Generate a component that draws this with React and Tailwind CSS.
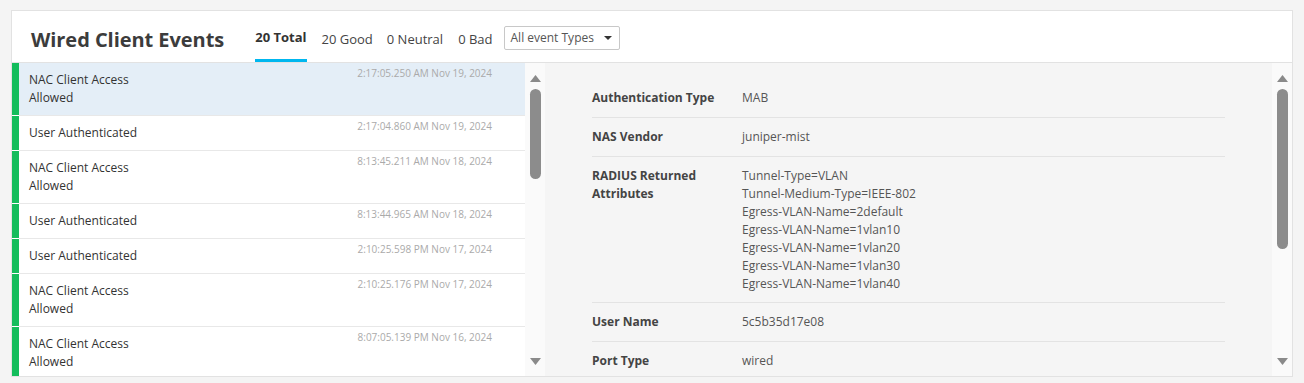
import React from 'react';

const events = [
  { title: 'NAC Client Access', sub: 'Allowed', time: '2:17:05.250 AM Nov 19, 2024', selected: true },
  { title: 'User Authenticated', time: '2:17:04.860 AM Nov 19, 2024' },
  { title: 'NAC Client Access', sub: 'Allowed', time: '8:13:45.211 AM Nov 18, 2024' },
  { title: 'User Authenticated', time: '8:13:44.965 AM Nov 18, 2024' },
  { title: 'User Authenticated', time: '2:10:25.598 PM Nov 17, 2024' },
  { title: 'NAC Client Access', sub: 'Allowed', time: '2:10:25.176 PM Nov 17, 2024' },
  { title: 'NAC Client Access', sub: 'Allowed', time: '8:07:05.139 PM Nov 16, 2024' },
];

const details = [
  { label: 'Authentication Type', value: ['MAB'] },
  { label: 'NAS Vendor', value: ['juniper-mist'] },
  {
    label: 'RADIUS Returned Attributes',
    value: [
      'Tunnel-Type=VLAN',
      'Tunnel-Medium-Type=IEEE-802',
      'Egress-VLAN-Name=2default',
      'Egress-VLAN-Name=1vlan10',
      'Egress-VLAN-Name=1vlan20',
      'Egress-VLAN-Name=1vlan30',
      'Egress-VLAN-Name=1vlan40',
    ],
  },
  { label: 'User Name', value: ['5c5b35d17e08'] },
  { label: 'Port Type', value: ['wired'] },
];

const Arrow = ({ down }) => (
  <svg width="11" height="7" viewBox="0 0 11 7" className="shrink-0">
    {down ? <path d="M0 0 L11 0 L5.5 7 Z" fill="#8a8a8a" /> : <path d="M0 7 L11 7 L5.5 0 Z" fill="#8a8a8a" />}
  </svg>
);

// fake scrollbar, the list and the detail pane both show one
const ScrollBar = ({ thumb }) => (
  <div className="w-[20px] shrink-0 bg-[#fafafa] flex flex-col items-center">
    <div className="mt-[12px]">
      <Arrow />
    </div>
    <div className={`mt-[7px] w-[11px] rounded-full bg-[#8c8c8c] ${thumb}`}></div>
    <div className="flex-1"></div>
    <div className="mb-[11px]">
      <Arrow down />
    </div>
  </div>
);

export default function App() {
  return (
    <div className="h-[383px] bg-[#f4f4f4] pt-[10px] pl-[11px] pr-[11px] font-['Open_Sans',sans-serif] text-[#333]">
      <div className="h-[367px] border border-[#e2e2e2] bg-white flex flex-col overflow-hidden">
        {/* header */}
        <div className="h-[52px] shrink-0 border-b border-[#e2e2e2] flex items-stretch pl-[19px]">
          <h1 className="self-center pt-[6px] text-[20px] font-bold text-[#3c3c3c] leading-none tracking-[-0.05px]">
            Wired Client Events
          </h1>
          <div className="ml-[31px] flex items-stretch text-[13px] text-[#444]">
            <div className="flex items-center border-b-[3px] border-[#00b7ef] pt-[6px] font-bold text-[#333]">20 Total</div>
            <div className="ml-[15px] flex items-center pt-[6px]">20 Good</div>
            <div className="ml-[14px] flex items-center pt-[6px]">0 Neutral</div>
            <div className="ml-[15px] flex items-center pt-[6px]">0 Bad</div>
            <div className="ml-[11px] self-center mt-[3px] h-[24px] w-[116px] border border-[#c8c8c8] rounded-[2px] flex items-center justify-between pl-[6px] pr-[7px] text-[12px] text-[#555]">
              <span>All event Types</span>
              <svg width="8" height="4" viewBox="0 0 8 4">
                <path d="M0 0 L8 0 L4 4 Z" fill="#333" />
              </svg>
            </div>
          </div>
        </div>

        {/* body */}
        <div className="flex flex-1 min-h-0">
          <div className="w-[513px] shrink-0 overflow-hidden">
            {events.map((ev, i) => (
              <div key={i} className="flex">
                <div className="w-[7px] shrink-0 bg-[#13bd5c] mb-[1px]"></div>
                <div
                  className={`flex-1 flex justify-between border-b border-[#e8e8e8] pl-[10px] pr-[33px] pt-[3px] pb-[8px] ${
                    ev.selected ? 'bg-[#e4eef7]' : 'bg-white'
                  }`}
                >
                  <div className="pt-[5px] text-[12px] leading-[18px] text-[#333]">
                    <div>{ev.title}</div>
                    {ev.sub && <div>{ev.sub}</div>}
                  </div>
                  <div className="text-[10px] leading-[14px] text-[#aaa]">{ev.time}</div>
                </div>
              </div>
            ))}
          </div>
          <ScrollBar thumb="h-[90px]" />

          <div className="flex-1 bg-[#f5f5f5] pt-[16px] px-[47px] overflow-hidden">
            {details.map((d, i) => (
              <div
                key={i}
                className={`flex border-b border-[#e3e3e3] text-[12px] leading-[18px] ${
                  d.value.length > 1 ? 'pt-[10px] pb-[9px]' : 'py-[10px]'
                }`}
              >
                <div className="w-[150px] shrink-0 pr-[20px] font-bold text-[#444]">{d.label}</div>
                <div className="text-[#555]">
                  {d.value.map((v, j) => (
                    <div key={j}>{v}</div>
                  ))}
                </div>
              </div>
            ))}
          </div>
          <ScrollBar thumb="h-[160px]" />
        </div>
      </div>
    </div>
  );
}
